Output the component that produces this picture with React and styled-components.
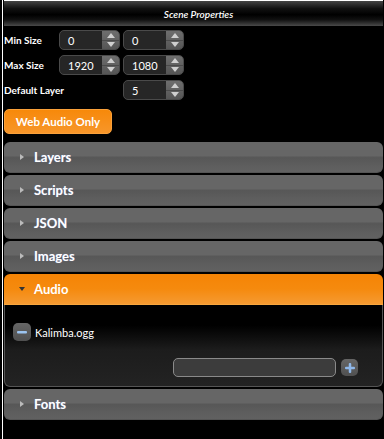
import React from "react";
import styled, { createGlobalStyle } from "styled-components";

const Global = createGlobalStyle`
  html, body { margin: 0; padding: 0; background: #000; }
  body { font-family: Lato, "Open Sans", sans-serif; color: #fff; }
  * { box-sizing: border-box; }
`;

const Page = styled.div`
  width: 384px;
  height: 439px;
  padding-left: 2px;
  display: flex;
  background: #000;
  overflow: hidden;
`;

const Panel = styled.div`
  flex: 1;
  border-left: 1px solid #fff;
  padding-left: 1px;
  padding-right: 1px;
  display: flex;
  flex-direction: column;
`;

const Header = styled.div`
  height: 26px;
  border-top: 1px solid #fff;
  background: linear-gradient(#444 0%, #111 30%, #000 55%, #111 75%, #4a4a4a 100%);
  display: flex;
  align-items: center;
  justify-content: center;
  font-style: italic;
  font-weight: 600;
  font-size: 10px;
  padding-left: 10px;
  color: #fff;
`;

const Form = styled.div`
  padding-top: 4px;
  display: flex;
  flex-direction: column;
  gap: 5px;
`;

const Row = styled.div`
  display: flex;
  align-items: center;
  gap: 3px;
  height: 20px;
`;

const Label = styled.div`
  width: 52px;
  font-size: 10px;
  font-weight: 700;
  white-space: nowrap;
  color: #fff;
`;

const Spacer = styled.div`
  width: ${(p) => p.w}px;
`;

const Spin = styled.div`
  width: ${(p) => p.w || 61}px;
  height: 20px;
  border-radius: 5px;
  border: 1px solid #4a4a4a;
  background: #262626;
  display: flex;
  overflow: hidden;
`;

const SpinValue = styled.div`
  flex: 1;
  padding-left: 8px;
  font-size: 11px;
  display: flex;
  align-items: center;
  color: #fff;
`;

const SpinButtons = styled.div`
  width: 17px;
  display: flex;
  flex-direction: column;
  background: linear-gradient(#6e6e6e, #555);
`;

const SpinBtn = styled.div`
  flex: 1;
  display: flex;
  align-items: center;
  justify-content: center;
  & + & { border-top: 1px solid #4a4a4a; }
`;

const Arrow = ({ up }) => (
  <svg width="8" height="5" viewBox="0 0 8 5">
    <path d={up ? "M0 5 L4 0 L8 5 Z" : "M0 0 L4 5 L8 0 Z"} fill="#cfcfcf" />
  </svg>
);

const Spinner = ({ value }) => (
  <Spin>
    <SpinValue>{value}</SpinValue>
    <SpinButtons>
      <SpinBtn><Arrow up /></SpinBtn>
      <SpinBtn><Arrow /></SpinBtn>
    </SpinButtons>
  </Spin>
);

const OrangeButton = styled.div`
  margin-top: 9px;
  width: 108px;
  height: 25px;
  border-radius: 5px;
  background: linear-gradient(#f7890a, #f7962a);
  border: 1px solid #f9a03a;
  display: flex;
  align-items: center;
  justify-content: center;
  font-size: 11.5px;
  font-weight: 700;
  color: #fff;
`;

const Accordion = styled.div`
  margin-top: 8px;
  display: flex;
  flex-direction: column;
  gap: 2px;
`;

const Item = styled.div`
  display: flex;
  flex-direction: column;
`;

const Head = styled.div`
  height: 31px;
  border-radius: ${(p) => (p.open ? "6px 6px 0 0" : "6px")};
  background: ${(p) =>
    p.open
      ? "linear-gradient(#f58405 0%, #f58a0e 50%, #f59a32 100%)"
      : "linear-gradient(#666 0%, #666 45%, #575757 52%, #5e5e5e 80%, #616161 100%)"};
  border-bottom: 1px solid ${(p) => (p.open ? "#f8a63e" : "#555")};
  display: flex;
  align-items: center;
  padding-left: 15px;
  gap: 9px;
  font-size: 13px;
  font-weight: 700;
  color: #fff;
  text-shadow: ${(p) => (p.open ? "none" : "0 0 1px rgba(140,170,255,0.6)")};
`;

const Tri = ({ open }) => (
  <svg width="6" height="6" viewBox="0 0 6 6">
    {open ? (
      <path d="M0 1 L6 1 L3 5 Z" fill="#333" />
    ) : (
      <path d="M1 0 L5 3 L1 6 Z" fill="#bbb" />
    )}
  </svg>
);

const Body = styled.div`
  height: 82px;
  border: 1px solid #555;
  border-top: none;
  border-radius: 0 0 6px 6px;
  background: linear-gradient(#000 0%, #000 25%, #1c1c1c 55%, #232323 100%);
  padding: 18px 24px 0 8px;
  display: flex;
  flex-direction: column;
`;

const FileRow = styled.div`
  display: flex;
  align-items: center;
  gap: 4px;
  font-size: 11px;
  color: #fff;
`;

const IconBtn = styled.div`
  width: ${(p) => p.s}px;
  height: ${(p) => p.s}px;
  border-radius: 5px;
  background: linear-gradient(#666, #505050);
  display: flex;
  align-items: center;
  justify-content: center;
`;

const AddRow = styled.div`
  margin-top: 17px;
  display: flex;
  justify-content: flex-end;
  align-items: center;
  gap: 5px;
`;

const TextInput = styled.div`
  width: 163px;
  height: 19px;
  border-radius: 5px;
  border: 1px solid #8a8a8a;
  background: #3c3c3c;
`;

export default function App() {
  return (
    <>
      <Global />
      <Page>
        <Panel>
          <Header>Scene Properties</Header>
          <Form>
            <Row>
              <Label>Min Size</Label>
              <Spinner value="0" />
              <Spinner value="0" />
            </Row>
            <Row>
              <Label>Max Size</Label>
              <Spinner value="1920" />
              <Spinner value="1080" />
            </Row>
            <Row>
              <Label>Default Layer</Label>
              <Spacer w={61} />
              <Spinner value="5" />
            </Row>
          </Form>
          <OrangeButton>Web Audio Only</OrangeButton>
          <Accordion>
            {["Layers", "Scripts", "JSON", "Images"].map((t) => (
              <Head key={t}>
                <Tri />
                {t}
              </Head>
            ))}
            <Item>
              <Head open>
                <Tri open />
                Audio
              </Head>
              <Body>
                <FileRow>
                  <IconBtn s={18}>
                    <svg width="10" height="3" viewBox="0 0 10 3">
                      <rect x="0" y="0" width="10" height="2.5" rx="1" fill="#9cc4f0" />
                    </svg>
                  </IconBtn>
                  Kalimba.ogg
                </FileRow>
                <AddRow>
                  <TextInput />
                  <IconBtn s={17}>
                    <svg width="10" height="10" viewBox="0 0 10 10">
                      <rect x="0" y="3.75" width="10" height="2.5" rx="1" fill="#8fb8ea" />
                      <rect x="3.75" y="0" width="2.5" height="10" rx="1" fill="#8fb8ea" />
                    </svg>
                  </IconBtn>
                </AddRow>
              </Body>
            </Item>
            <Head>
              <Tri />
              Fonts
            </Head>
          </Accordion>
        </Panel>
      </Page>
    </>
  );
}
